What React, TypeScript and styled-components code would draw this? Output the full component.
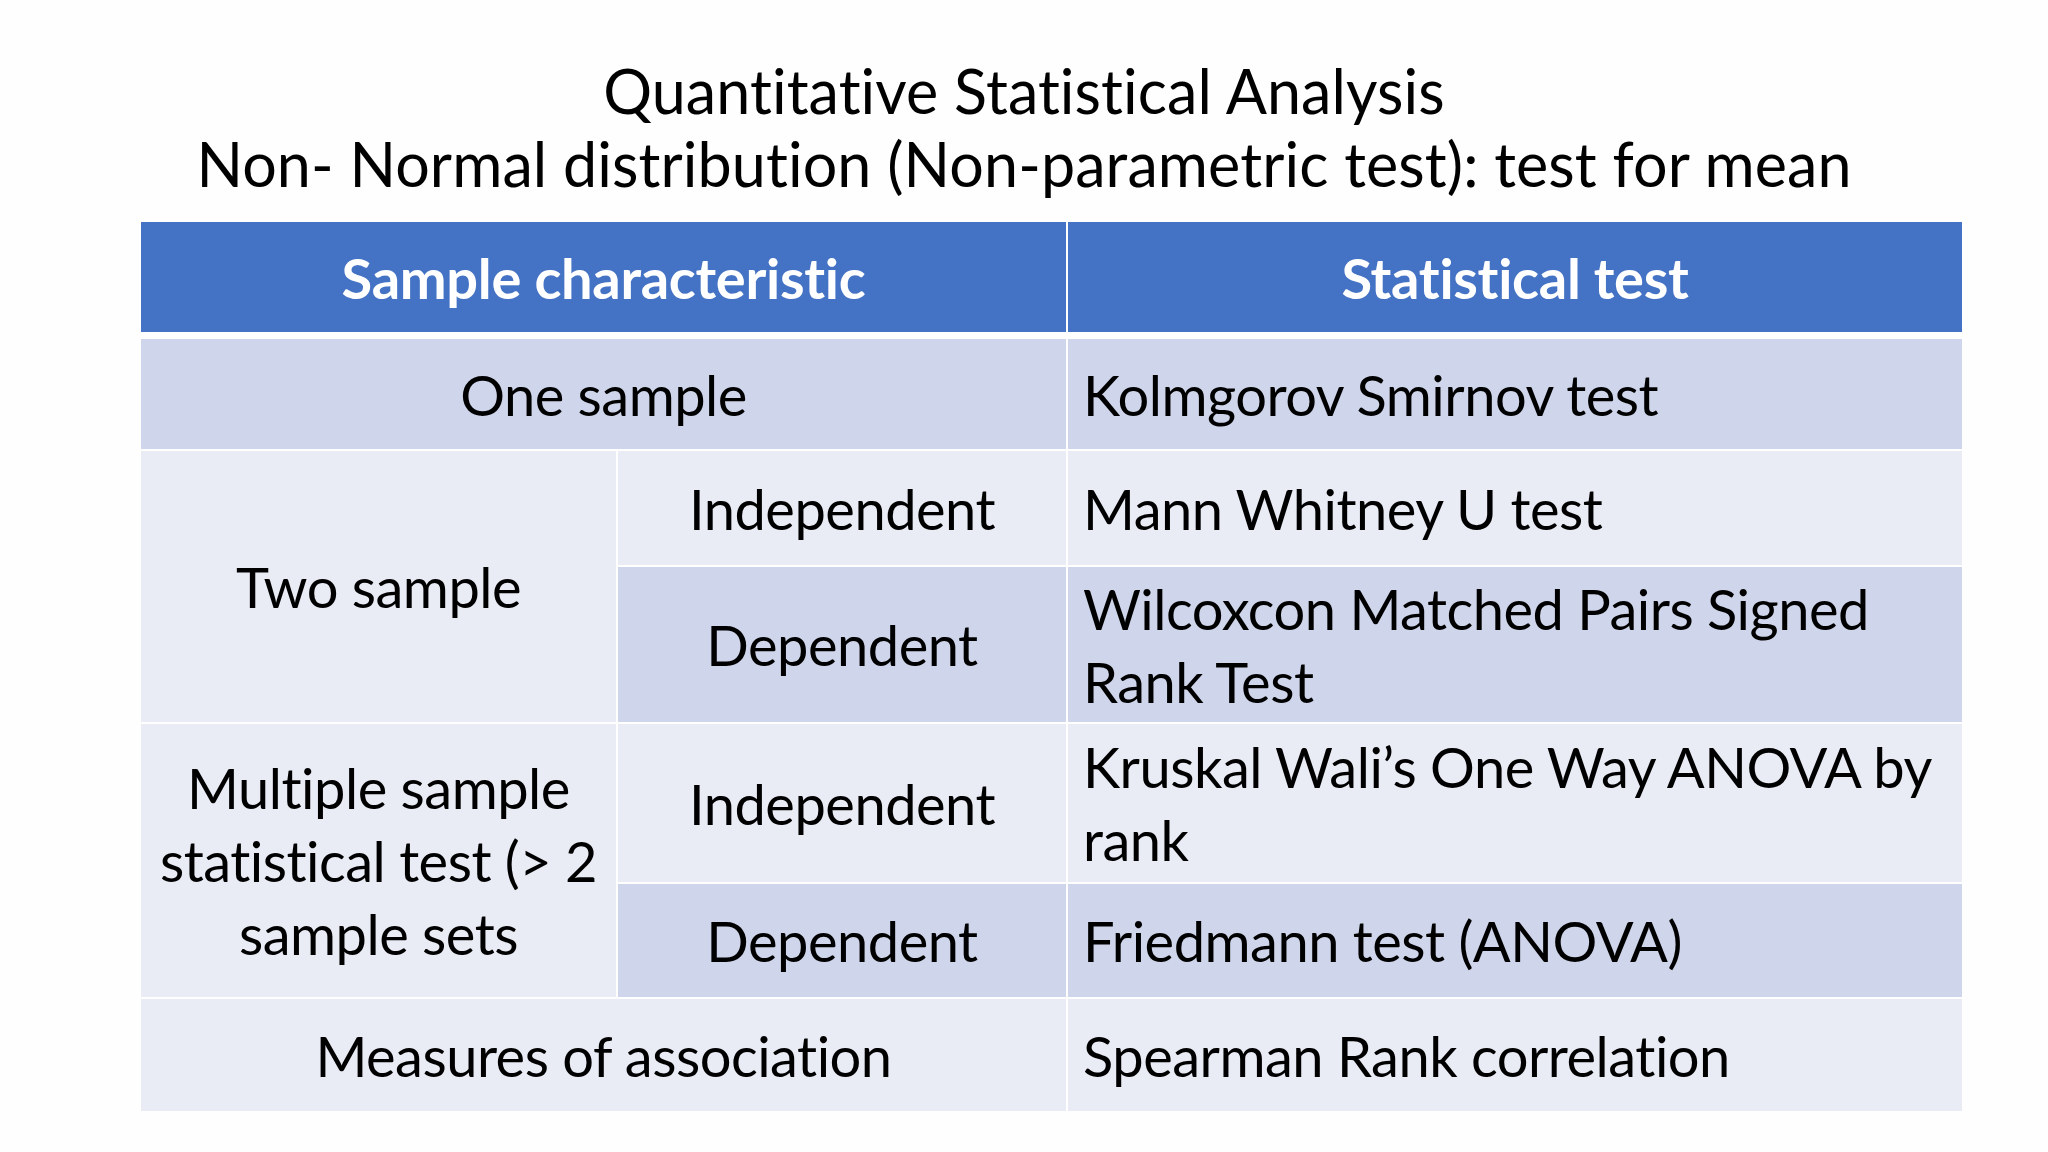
import styled, { createGlobalStyle } from 'styled-components'

const GlobalStyle = createGlobalStyle`
  html, body {
    margin: 0;
    padding: 0;
    background: #fefefe;
  }
  body {
    font-family: Lato, "Open Sans", "Liberation Sans", sans-serif;
    font-variant-ligatures: none;
    color: #000;
  }
`

const Slide = styled.div`
  width: 2048px;
  height: 1152px;
  box-sizing: border-box;
  padding-top: 54px;
  display: flex;
  flex-direction: column;
  align-items: center;
  overflow: hidden;
`

const Title = styled.h1`
  margin: 0;
  font-size: 61px;
  font-weight: 400;
  line-height: 73px;
  letter-spacing: 0.1px;
  text-align: center;
  white-space: nowrap;
`

// the table sits a little right of centre on the slide
const Table = styled.div`
  align-self: flex-start;
  margin: 22px 0 0 141px;
  width: 1821px;
  display: flex;
  flex-direction: column;
`

const HeaderRow = styled.div`
  display: grid;
  grid-template-columns: 925px 894px;
  column-gap: 2px;
  height: 110px;
`

const HeaderCell = styled.div`
  background: #4472c4;
  color: #fff;
  font-size: 56px;
  font-weight: 700;
  letter-spacing: -0.3px;
  display: flex;
  align-items: center;
  justify-content: center;
`

const Body = styled.div`
  margin-top: 7px;
  display: grid;
  grid-template-columns: 475px 448px 894px;
  grid-template-rows: 110px 114px 155px 158px 113px 112px;
  gap: 2px;
`

const Cell = styled.div<{ $dark?: boolean; $left?: boolean; $col: string; $row: string }>`
  grid-column: ${p => p.$col};
  grid-row: ${p => p.$row};
  background: ${p => (p.$dark ? '#cfd5ea' : '#e9ebf5')};
  font-size: 56px;
  line-height: 73px;
  letter-spacing: -0.5px;
  box-sizing: border-box;
  padding: 0 15px;
  display: flex;
  flex-direction: column;
  justify-content: center;
  align-items: ${p => (p.$left ? 'flex-start' : 'center')};
  text-align: ${p => (p.$left ? 'left' : 'center')};
  white-space: nowrap;
`

export default function App() {
  return (
    <>
      <GlobalStyle />
      <Slide>
        <Title>
          Quantitative Statistical Analysis
          <br />
          Non- Normal distribution (Non-parametric test): test for mean
        </Title>
        <Table>
          <HeaderRow>
            <HeaderCell>Sample characteristic</HeaderCell>
            <HeaderCell>Statistical test</HeaderCell>
          </HeaderRow>
          <Body>
            <Cell $dark $col="1 / 3" $row="1">One sample</Cell>
            <Cell $dark $left $col="3" $row="1">Kolmgorov Smirnov test</Cell>

            <Cell $col="1" $row="2 / 4">Two sample</Cell>
            <Cell $col="2" $row="2">Independent</Cell>
            <Cell $left $col="3" $row="2">Mann Whitney U test</Cell>
            <Cell $dark $col="2" $row="3">Dependent</Cell>
            <Cell $dark $left $col="3" $row="3">
              Wilcoxcon Matched Pairs Signed
              <br />
              Rank Test
            </Cell>

            <Cell $col="1" $row="4 / 6">
              Multiple sample
              <br />
              statistical test (&gt; 2
              <br />
              sample sets
            </Cell>
            <Cell $col="2" $row="4">Independent</Cell>
            <Cell $left $col="3" $row="4">
              Kruskal Wali’s One Way ANOVA by
              <br />
              rank
            </Cell>
            <Cell $dark $col="2" $row="5">Dependent</Cell>
            <Cell $dark $left $col="3" $row="5">Friedmann test (ANOVA)</Cell>

            <Cell $col="1 / 3" $row="6">Measures of association</Cell>
            <Cell $left $col="3" $row="6">Spearman Rank correlation</Cell>
          </Body>
        </Table>
      </Slide>
    </>
  )
}
